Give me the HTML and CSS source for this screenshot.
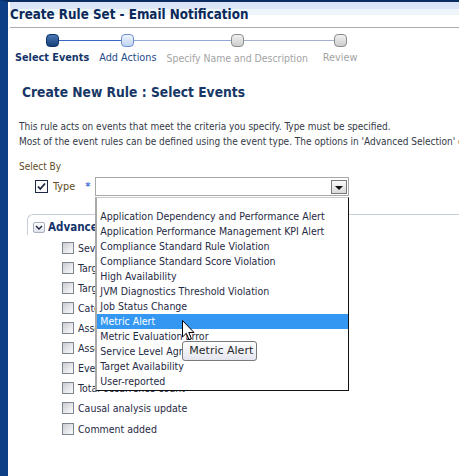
FILE: index.html
```html
<!DOCTYPE html>
<html>
<head>
<meta charset="utf-8">
<title>Create Rule Set - Email Notification</title>
<link rel="stylesheet" href="styles.css">
</head>
<body>
<div class="window">
  <div class="main">
    <header class="titlebar">
      <h1 class="title">Create Rule Set - Email Notification</h1>
    </header>

    <nav class="train">
      <div class="step current"><span class="stop"></span><span class="step-label">Select Events</span></div>
      <div class="step next"><span class="stop"></span><span class="step-label">Add Actions</span></div>
      <div class="step disabled"><span class="stop"></span><span class="step-label">Specify Name and Description</span></div>
      <div class="step disabled last"><span class="stop"></span><span class="step-label">Review</span></div>
    </nav>

    <section class="content">
      <h2 class="heading">Create New Rule : Select Events</h2>
      <p class="desc">This rule acts on events that meet the criteria you specify. Type must be specified.<br>Most of the event rules can be defined using the event type. The options in 'Advanced Selection' can be used to further refine the rule.</p>
      <div class="field-label">Select By</div>

      <div class="type-row">
        <span class="cb checked"><svg viewBox="0 0 13 13" width="13" height="13"><path d="M3 6.5 L5.3 9 L10 3.5" fill="none" stroke="#1b2540" stroke-width="1.8"/></svg></span>
        <span class="type-label">Type</span>
        <span class="req">*</span>
        <div class="select">
          <span class="select-btn"><span class="tri"></span></span>
          <ul class="listbox">
            <li class="blank"></li>
            <li>Application Dependency and Performance Alert</li>
            <li>Application Performance Management KPI Alert</li>
            <li>Compliance Standard Rule Violation</li>
            <li>Compliance Standard Score Violation</li>
            <li>High Availability</li>
            <li>JVM Diagnostics Threshold Violation</li>
            <li>Job Status Change</li>
            <li class="sel">Metric Alert</li>
            <li>Metric Evaluation Error</li>
            <li>Service Level Agreement Alert</li>
            <li>Target Availability</li>
            <li>User-reported</li>
          </ul>
          <div class="tooltip">Metric Alert</div>
          <svg class="cursor" width="13" height="21" viewBox="0 0 13 21"><path d="M0.5 0.5 L0.5 17 L4.3 13.3 L7 19.6 L9.4 18.6 L6.8 12.5 L12 12.5 Z" fill="#fff" stroke="#000" stroke-width="1" stroke-linejoin="miter"/></svg>
        </div>
      </div>

      <div class="adv">
        <div class="adv-header">
          <span class="toggle"><svg viewBox="0 0 12 11" width="12" height="11"><path d="M3 4 L6 7 L9 4" fill="none" stroke="#1b2540" stroke-width="1.4"/></svg></span>
          <span class="adv-title">Advanced Selection</span>
        </div>
        <ul class="adv-list">
          <li><span class="cb"></span>Severity</li>
          <li><span class="cb"></span>Target type</li>
          <li><span class="cb"></span>Target</li>
          <li><span class="cb"></span>Category</li>
          <li><span class="cb"></span>Associated with incident</li>
          <li><span class="cb"></span>Associated with problem</li>
          <li><span class="cb"></span>Event name</li>
          <li><span class="cb"></span>Total occurrence count</li>
          <li><span class="cb"></span>Causal analysis update</li>
          <li><span class="cb"></span>Comment added</li>
        </ul>
      </div>
    </section>
  </div>
</div>
</body>
</html>
```

FILE: styles.css
```css
* { box-sizing: border-box; }

html, body {
  margin: 0;
  padding: 0;
  width: 459px;
  height: 476px;
  overflow: hidden;
  background: #ffffff;
}

body {
  font-family: "DejaVu Sans Condensed", "Liberation Sans", sans-serif;
  font-size: 10px;
  color: #26304a;
}

.window {
  display: flex;
  width: 459px;
  height: 476px;
  border-left: 8px solid #0d3f87;
  border-top: 2px solid #0a2c60;
}

.main {
  flex: 1;
  min-width: 0;
  background: #ffffff;
  overflow: hidden;
}

/* title bar */
.titlebar {
  height: 26px;
  margin-left: 2px;
  border-bottom: 1px solid #a9abae;
  background: linear-gradient(to bottom, #dbe4f6 0, #dde6f6 7px, #eef6f9 7px, #eef6f9 13px, #ffffff 13px);
}

.title {
  margin: 0;
  font-size: 13.3px;
  font-weight: bold;
  line-height: 25px;
  color: #0b2a5a;
  white-space: nowrap;
}

/* train */
.train {
  display: flex;
  padding: 6px 0 0 2px;
  white-space: nowrap;
}

.step {
  position: relative;
  display: flex;
  flex-direction: column;
  align-items: center;
  padding: 0 5px;
}

.step.last { margin-left: 5px; }

.step::before,
.step::after {
  content: "";
  position: absolute;
  top: 6px;
  height: 1px;
}

.step::before { left: 0; right: 50%; }
.step::after { left: 50%; right: 0; }

.step.current::before { display: none; }
.step.current::after { background: #3b67c4; }
.step.next::before { background: #3b67c4; }
.step.next::after { background: #93a8da; }
.step.disabled::before { background: #93a8da; }
.step.disabled::after { background: #a6b1d2; }
.step.last::before { background: #a6b1d2; left: -5px; }
.step.last::after { display: none; }

.stop {
  position: relative;
  z-index: 1;
  width: 13px;
  height: 13px;
  border-radius: 4px;
}

.current .stop {
  background: linear-gradient(to bottom, #4a78b4, #163f7a);
  border: 1px solid #0d3268;
}

.next .stop {
  background: linear-gradient(to bottom, #eef4fd, #bfd3f1);
  border: 1px solid #6d90d0;
}

.disabled .stop {
  background: linear-gradient(to bottom, #f0f0f0, #cdcdcd);
  border: 1px solid #8c8c8c;
}

.step-label {
  margin-top: 4px;
  line-height: 14px;
  font-size: 10.8px;
  color: #1f4c8c;
}

.current .step-label { font-weight: bold; color: #15346a; font-size: 10.8px; }
.disabled .step-label { color: #a3a3a3; font-size: 10.4px; }
.last .step-label { font-size: 10.8px; }

/* content */
.content {
  padding: 0 0 0 11px;
}

.heading {
  margin: 18px 0 0 3px;
  font-size: 13.7px;
  font-weight: bold;
  line-height: 18px;
  color: #173766;
  white-space: nowrap;
}

.desc {
  margin: 18px 0 0 0;
  line-height: 15px;
  white-space: nowrap;
  color: #343a48;
}

.field-label {
  margin-top: 10px;
  line-height: 15px;
  color: #5e4c1e;
}

.type-row {
  display: flex;
  align-items: center;
  height: 19px;
  margin-top: 3px;
}

.cb {
  display: inline-block;
  flex: none;
  width: 12px;
  height: 12px;
  border: 1px solid #7f8590;
  background: linear-gradient(135deg, #c9cbd0 0%, #e6e7ea 55%, #fafafa 100%);
}

.cb.checked {
  width: 13px;
  height: 13px;
  margin-left: 16px;
  border: 1px solid #1c2746;
  background: #fbfbfb;
  position: relative;
}

.cb.checked svg {
  position: absolute;
  left: -1px;
  top: -1px;
}

.type-label {
  margin-left: 5px;
  color: #5e4c1e;
  font-size: 10.8px;
}

.req {
  margin-left: 10px;
  color: #3f6fd0;
  font-size: 11px;
  font-weight: bold;
}

.select {
  position: relative;
  width: 254px;
  height: 19px;
  margin-left: 5px;
  border: 1px solid #a8a8a8;
  background: #ffffff;
}

.select-btn {
  position: absolute;
  right: 1px;
  top: 2px;
  width: 16px;
  height: 14px;
  border: 1px solid #7a7a7a;
  background: linear-gradient(to bottom, #fafafa, #d9d9d9);
  display: flex;
  align-items: center;
  justify-content: center;
}

.tri {
  width: 0;
  height: 0;
  border-left: 4px solid transparent;
  border-right: 4px solid transparent;
  border-top: 4px solid #111;
  margin-top: 1px;
}

.listbox {
  position: absolute;
  z-index: 5;
  left: -1px;
  top: 19px;
  width: 254px;
  margin: 0;
  padding: 0 0 1px 0;
  list-style: none;
  background: #ffffff;
  border: 1px solid #111;
  border-left: 2px solid #a9a9a9;
  border-top: 1px solid #c8c8c8;
}

.listbox li {
  height: 15px;
  line-height: 15px;
  padding-left: 3px;
  font-size: 10.5px;
  color: #1f2a44;
  white-space: nowrap;
}

.listbox li.blank { height: 11px; }

.listbox li.sel {
  background: #3497f2;
  color: #ffffff;
}

.tooltip {
  position: absolute;
  z-index: 6;
  left: 86px;
  top: 163px;
  width: 75px;
  height: 20px;
  padding-left: 6px;
  line-height: 18px;
  font-family: "DejaVu Sans", "Liberation Sans", sans-serif;
  font-size: 11px;
  color: #2a2a2a;
  border: 1px solid #7a7a7a;
  border-radius: 3px;
  background: linear-gradient(to bottom, #ffffff, #e3e4ef);
  white-space: nowrap;
}

.cursor {
  position: absolute;
  z-index: 7;
  left: 86px;
  top: 142px;
}

/* advanced section */
.adv {
  margin-top: 18px;
  margin-left: 8px;
}

.adv-header {
  display: flex;
  align-items: center;
  height: 21px;
  padding: 4px 0 0 5px;
  border-top: 1px solid #c6cdd9;
  border-left: 1px solid #c6cdd9;
  border-top-left-radius: 6px;
}

.toggle {
  display: inline-block;
  width: 12px;
  height: 11px;
  border: 1px solid #a9b0bf;
  border-radius: 2px;
  background: linear-gradient(to bottom, #ffffff, #dfe3ea);
  position: relative;
}

.toggle svg {
  position: absolute;
  left: -1px;
  top: -1px;
}

.adv-title {
  margin-left: 3px;
  font-size: 11.5px;
  font-weight: bold;
  color: #15346a;
  white-space: nowrap;
}

.adv-list {
  list-style: none;
  margin: 3px 0 0 0;
  padding: 0 0 0 35px;
}

.adv-list li {
  display: flex;
  align-items: center;
  height: 20px;
  white-space: nowrap;
  font-size: 10.5px;
  color: #1f2a44;
}

.adv-list li .cb { margin-right: 4px; }
.adv-list li:nth-child(n+9) { height: 20.5px; }
```
